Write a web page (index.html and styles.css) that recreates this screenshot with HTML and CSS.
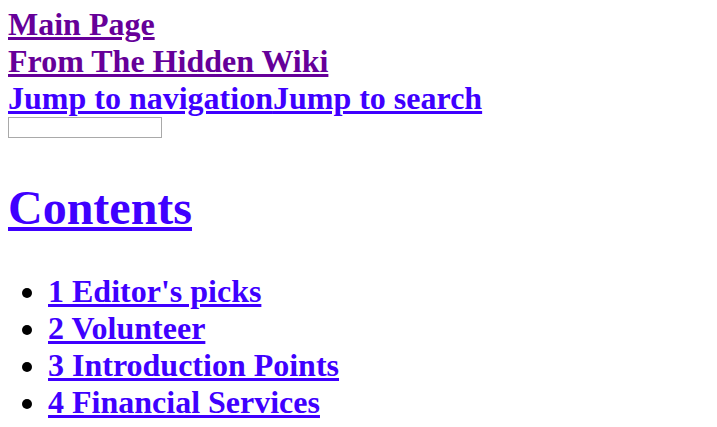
FILE: index.html
```html
<!DOCTYPE html>
<html>
<head>
<meta charset="utf-8">
<title>Main Page</title>
<link rel="stylesheet" href="styles.css">
</head>
<body>
<div class="page">
  <div class="line"><a class="visited" href="#">Main Page</a></div>
  <div class="line"><a class="visited" href="#">From The Hidden Wiki</a></div>
  <div class="line"><a href="#">Jump to navigation</a><a href="#">Jump to search</a></div>
  <div class="search"><input type="text" class="search-input"></div>
  <h2 class="toc-title"><a href="#">Contents</a></h2>
  <ul class="toc">
    <li><a href="#">1 Editor's picks</a></li>
    <li><a href="#">2 Volunteer</a></li>
    <li><a href="#">3 Introduction Points</a></li>
    <li><a href="#">4 Financial Services</a></li>
  </ul>
</div>
</body>
</html>
```

FILE: styles.css
```css
html, body {
  background: #ffffff;
}
body {
  margin: 6px 8px 8px 8px;
  font-family: "Liberation Serif", "Times New Roman", serif;
  font-size: 32px;
  font-weight: bold;
  color: #000000;
}
a {
  color: #3f00ff;
  text-decoration: underline;
}
a.visited {
  color: #660099;
}
.line {
  line-height: normal;
}
.search {
  font-size: 13.333px;
  line-height: 0;
}
.search-input {
  font-size: 13.333px;
  width: 154px;
  height: 21px;
  box-sizing: border-box;
  border: 1px solid #a9a9a9;
  padding: 1px 2px;
  margin: 0;
}
.toc-title {
  font-size: 48px;
  margin: 42px 0 38px 0;
}
.toc {
  margin: 0;
  padding-left: 40px;
}
```
